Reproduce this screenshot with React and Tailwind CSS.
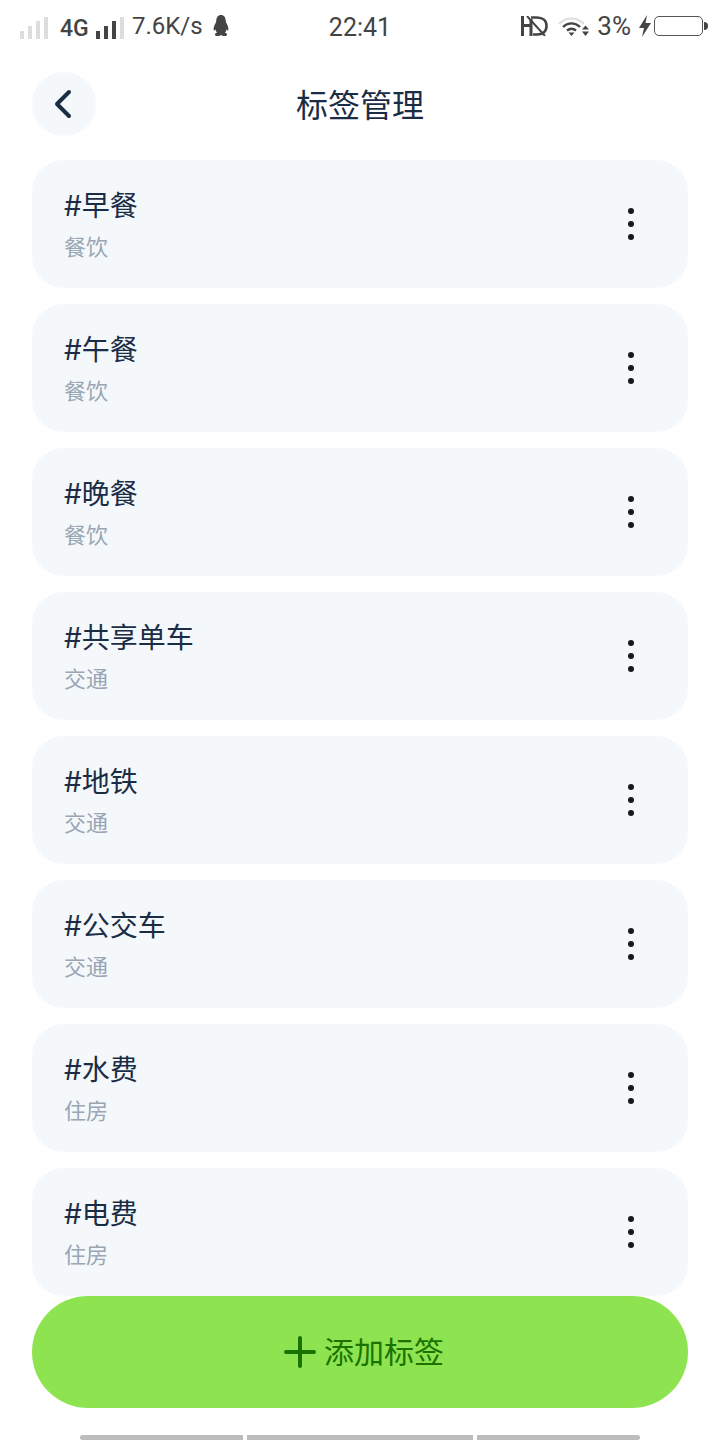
import { ChevronLeft } from 'lucide-react';

const tags = [
  { name: '#早餐', group: '餐饮' },
  { name: '#午餐', group: '餐饮' },
  { name: '#晚餐', group: '餐饮' },
  { name: '#共享单车', group: '交通' },
  { name: '#地铁', group: '交通' },
  { name: '#公交车', group: '交通' },
  { name: '#水费', group: '住房' },
  { name: '#电费', group: '住房' },
];

const SignalBars = ({ levels }) => (
  <div className="flex items-end gap-1">
    {levels.map(([h, on], i) => (
      <div key={i} className={on ? 'w-1 bg-[#444444]' : 'w-1 bg-[#dddddd]'} style={{ height: h }} />
    ))}
  </div>
);

const Penguin = () => (
  <svg width="18" height="22" viewBox="0 0 20 22" fill="#444444" preserveAspectRatio="none">
    <path d="M10 0c3.400 0 5.200 2.600 5.300 6 .1 1.600 1 2.400 1.900 4.300 1.100 2.400 1.300 4.700.7 5.200-.5.300-1.100-.3-1.700-1.300-.3 1.400-.9 2.500-1.800 3.400 1.500.6 2.500 1.200 2.400 2.100-.2 1.100-2.400 1.500-4.300 1.200-1.200-.2-1.900-.7-2.500-.7s-1.300.5-2.500.7c-1.900.3-4.100-.1-4.300-1.200-.1-.9.9-1.500 2.400-2.100-.9-.9-1.500-2-1.800-3.400-.6 1-1.200 1.600-1.700 1.300-.6-.5-.4-2.800.7-5.200C3.700 8.400 4.600 7.600 4.700 6 4.800 2.600 6.600 0 10 0z" />
  </svg>
);

const NoHd = () => (
  <svg width="28" height="20" viewBox="0 0 28 20" fill="none" stroke="#444444">
    <path d="M1.500 0v20M10 3v17M1.500 9.500H10" strokeWidth="3" />
    <path d="M10 1.500h6c6 0 9.500 3.300 9.500 8.500s-3.500 8.500-9.500 8.500h-4" strokeWidth="2.600" />
    <path d="M6 0l18 20" strokeWidth="2" />
  </svg>
);

const Wifi = () => (
  <svg width="32" height="22" viewBox="0 0 32 22" fill="none">
    <path d="M1 9c7-7.500 18-7.500 25 0" stroke="#dddddd" strokeWidth="2" />
    <path d="M5 12c5-4.800 12-4.800 17 0" stroke="#444444" strokeWidth="2.400" />
    <path d="M9 15.500c2.800-2.300 6.200-2.300 9 0" stroke="#444444" strokeWidth="2.400" />
    <path d="M10.500 17.500h6L13.500 21z" fill="#444444" />
    <path d="M24 14.500h7l-3.500-4zM24 16.500h7l-3.500 4.500z" fill="#444444" />
  </svg>
);

const StatusBar = () => (
  <div
    className="h-[52px] flex items-center justify-between pl-5 pr-3 text-[#444444] text-[24px] leading-none"
    style={{ fontFamily: 'Roboto, sans-serif' }}
  >
    <div className="flex items-center w-[260px]">
      <div className="mt-1">
        <SignalBars levels={[[8, false], [13, false], [18, false], [22, false]]} />
      </div>
      <span className="ml-3 w-[30px] text-[23px] font-medium mt-1">4G</span>
      <div className="ml-[6px] mt-1">
        <SignalBars levels={[[8, true], [13, true], [18, true], [22, false]]} />
      </div>
      <span className="ml-2 w-[70px]">7.6K/s</span>
      <div className="ml-[10px]"><Penguin /></div>
    </div>
    <span className="mt-[2px] text-[25px]">22:41</span>
    <div className="flex items-center justify-end w-[268px]">
      <NoHd />
      <div className="ml-[9px]"><Wifi /></div>
      <span className="ml-[7px] text-[26px]">3%</span>
      <svg className="ml-2" width="12" height="22" viewBox="0 0 12 22" fill="#444444">
        <path d="M8 0L0 13h5l-2 9 9-14H6.500z" />
      </svg>
      <div className="ml-[3px] w-[49px] h-[20px] rounded-[5px] border border-[#555555]" />
      <div className="ml-[1px] w-[4px] h-[8px] bg-[#444444] rounded-r-sm" />
    </div>
  </div>
);

const TagCard = ({ name, group }) => (
  <div className="h-[128px] rounded-[32px] bg-[#f4f8fb] pl-8 pr-[54px] flex items-center justify-between">
    <div className="pt-[2px]">
      <p className="text-[28px] leading-[36px] text-[#1b2d45]">{name}</p>
      <p className="mt-2 text-[22px] leading-[30px] text-[#9aa6b4]">{group}</p>
    </div>
    <div className="flex flex-col gap-[7px]">
      <div className="w-[6px] h-[6px] rounded-full bg-[#15181c]" />
      <div className="w-[6px] h-[6px] rounded-full bg-[#15181c]" />
      <div className="w-[6px] h-[6px] rounded-full bg-[#15181c]" />
    </div>
  </div>
);

export default function App() {
  return (
    <div
      className="w-[720px] h-[1440px] bg-white overflow-hidden flex flex-col"
      style={{ fontFamily: 'Inter, "Noto Sans CJK SC", sans-serif' }}
    >
      <StatusBar />

      {/* Header */}
      <div className="mt-5 mx-8 h-16 flex items-center">
        <div className="w-16 h-16 rounded-full bg-[#f4f8fb] flex items-center justify-center">
          <ChevronLeft size={48} strokeWidth={2} className="text-[#1b2d45] -ml-[3px]" />
        </div>
        <h1 className="flex-1 text-center text-[32px] leading-none text-[#1b2d45] pr-16 mt-1 font-normal">标签管理</h1>
      </div>

      {/* Tag list */}
      <div className="mt-6 mx-8 flex flex-col gap-4">
        {tags.map((t) => (
          <TagCard key={t.name} name={t.name} group={t.group} />
        ))}
      </div>

      {/* Add button */}
      <div className="mx-8 h-[112px] shrink-0 rounded-[56px] bg-[#8ee350] pl-2 flex items-center justify-center gap-2 text-[#1a7300]">
        <svg width="32" height="32" viewBox="0 0 32 32" stroke="#1a7300" strokeWidth="4" strokeLinecap="round">
          <path d="M2 16h28M16 2v28" />
        </svg>
        <span className="text-[30px] leading-none">添加标签</span>
      </div>

      {/* Nav bar */}
      <div className="mt-[27px] mx-20 flex gap-1">
        <div className="w-[163px] h-[5px] bg-[#bdbdbd] rounded-l-sm" />
        <div className="w-[226px] h-[5px] bg-[#bdbdbd]" />
        <div className="w-[163px] h-[5px] bg-[#bdbdbd] rounded-r-sm" />
      </div>
    </div>
  );
}
